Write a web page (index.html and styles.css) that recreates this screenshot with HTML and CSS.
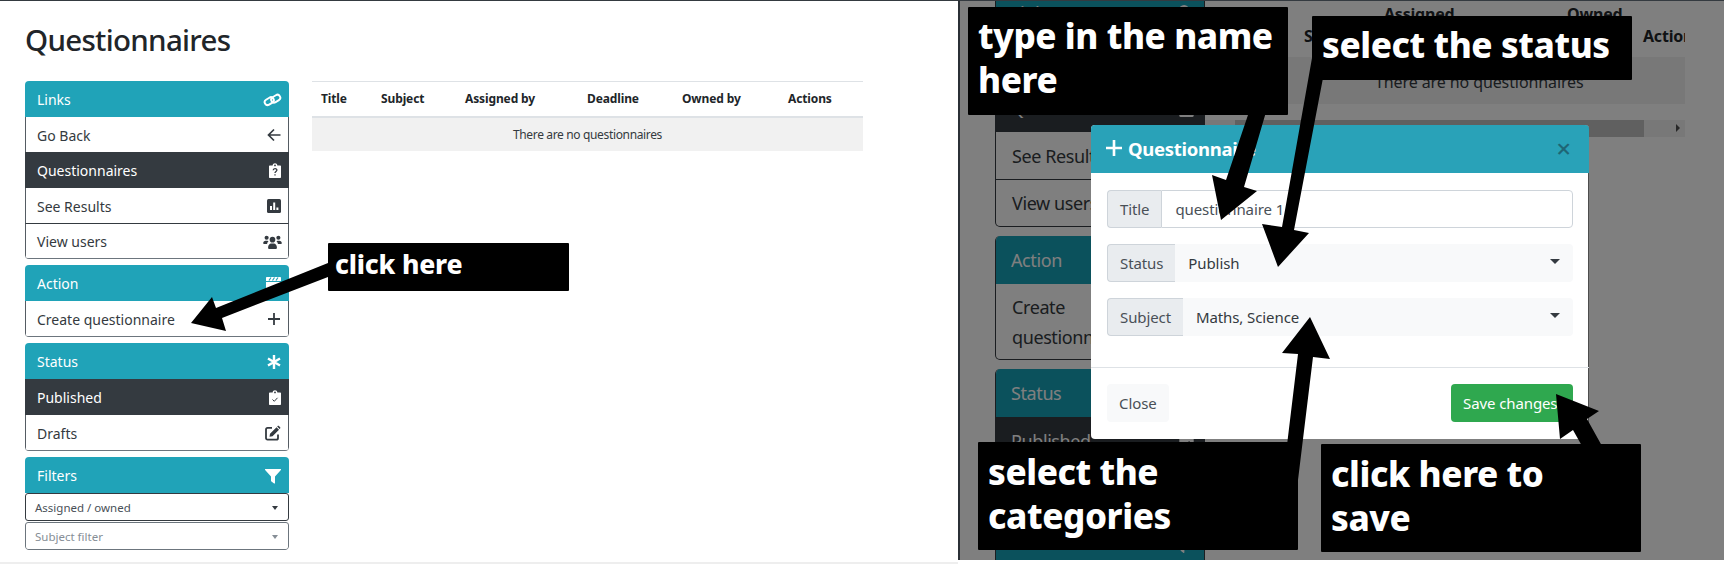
FILE: index.html
```html
<!DOCTYPE html>
<html lang="en">
<head>
<meta charset="utf-8">
<title>Questionnaires</title>
<link rel="stylesheet" href="styles.css">
</head>
<body>
<svg class="defs" width="0" height="0" aria-hidden="true">
  <symbol id="i-link" viewBox="0 0 20 16"><g fill="none" stroke="currentColor" stroke-width="2.2"><rect x="0.8" y="6.2" width="11" height="6.6" rx="3.3" transform="rotate(-32 6 9.5)"/><rect x="8.2" y="3.2" width="11" height="6.6" rx="3.3" transform="rotate(-32 13.7 6.5)"/></g></symbol>
  <symbol id="i-back" viewBox="0 0 14 14"><path d="M13.5 7H1.5M7 1.5 1.5 7 7 12.5" fill="none" stroke="currentColor" stroke-width="1.7"/></symbol>
  <symbol id="i-qclip" viewBox="0 0 12 15"><path fill="currentColor" fill-rule="evenodd" d="M1 2.5h2.6C3.8 1.1 4.8.2 6 .2s2.2.9 2.4 2.3H11c.6 0 1 .4 1 1V14c0 .6-.4 1-1 1H1c-.6 0-1-.4-1-1V3.500c0-.6.4-1 1-1zM6 1.500a.9.9 0 1 0 0 1.800.9.9 0 0 0 0-1.800z"/><path d="M4.200 7.300c0-2.300 3.700-2.300 3.700-.2 0 1.500-1.900 1.500-1.900 3M6 11.200v1.400" fill="none" stroke="#343a40" stroke-width="1.300"/></symbol>
  <symbol id="i-poll" viewBox="0 0 14 14"><rect width="14" height="14" rx="1.500" fill="currentColor"/><path d="M3 7h2v4H3zM6.200 3.500h2V11h-2zM9.400 8.500h2V11h-2z" fill="#fff"/></symbol>
  <symbol id="i-users" viewBox="0 0 20 15"><g fill="currentColor"><circle cx="3.700" cy="3" r="2.200"/><circle cx="16.300" cy="3" r="2.200"/><circle cx="10" cy="5" r="3"/><path d="M0 9.200c0-2 1.200-3 2.500-3h2c.5 0 1 .2 1.300.5-1 .7-1.500 1.700-1.600 3H1c-.6 0-1-.2-1-.5zM20 9.200c0-2-1.200-3-2.500-3h-2c-.5 0-1 .2-1.300.5 1 .7 1.500 1.700 1.600 3H19c.6 0 1-.2 1-.5zM5.300 13c0-2 1.500-4 3.200-4h3c1.700 0 3.200 2 3.200 4v1c0 .6-.4 1-1 1H6.300c-.6 0-1-.4-1-1z"/></g></symbol>
  <symbol id="i-clap" viewBox="0 0 15 15"><path fill="currentColor" d="M1 1h13c.6 0 1 .4 1 1v3H0V2c0-.6.4-1 1-1zM0 6h15v7c0 .6-.4 1-1 1H1c-.6 0-1-.4-1-1z"/><path d="M3 4.500 5 1.500M6.500 4.500l2-3M10 4.500l2-3" stroke="#20a3b8" stroke-width="1.200"/></symbol>
  <symbol id="i-plus" viewBox="0 0 14 14"><path d="M7 1v12M1 7h12" fill="none" stroke="currentColor" stroke-width="1.800"/></symbol>
  <symbol id="i-plus-bold" viewBox="0 0 14 14"><path d="M7 0v14M0 7h14" fill="none" stroke="currentColor" stroke-width="2.300"/></symbol>
  <symbol id="i-star" viewBox="0 0 14 14"><path d="M7 0v14M1 3.500l12 7M13 3.500l-12 7" fill="none" stroke="currentColor" stroke-width="2.400"/></symbol>
  <symbol id="i-cclip" viewBox="0 0 12 15"><path fill="currentColor" fill-rule="evenodd" d="M1 2.500h2.600C3.800 1.100 4.800.2 6 .2s2.200.9 2.400 2.300H11c.6 0 1 .4 1 1V14c0 .6-.4 1-1 1H1c-.6 0-1-.4-1-1V3.500c0-.6.4-1 1-1zM6 1.500a.9.9 0 1 0 0 1.800.9.9 0 0 0 0-1.800z"/><path d="m3.500 9.500 1.800 1.800 3.200-3.500" fill="none" stroke="#343a40" stroke-width="1"/></symbol>
  <symbol id="i-edit" viewBox="0 0 16 16"><path d="M13 9.500V13c0 1-.6 1.700-1.600 1.700H2.600C1.600 14.700 1 14 1 13V4.500c0-1 .6-1.600 1.600-1.600H7" fill="none" stroke="currentColor" stroke-width="1.800"/><path fill="currentColor" d="M11.500 2.200 14 4.700 7.500 11.200l-3 .5.500-3zM12.500 1.200c.5-.5 1.200-.5 1.600 0l.9.900c.5.500.5 1.100 0 1.600l-.4.400L12.100 1.600z"/></symbol>
  <symbol id="i-filter" viewBox="0 0 16 16"><path fill="currentColor" d="M.5 1h15c.5 0 .7.500.4.900L10 8.500V15c0 .5-.5.700-.9.400l-2.700-2c-.3-.2-.4-.4-.4-.8V8.500L.1 1.900C-.2 1.500 0 1 .5 1z"/></symbol>
</svg>

<main class="shot">
  <section class="panel panel-left">
    <h1 class="page-title">Questionnaires</h1>
    <div class="columns">
      <aside class="sidebar">
        <div class="card">
          <div class="card-head"><span>Links</span><svg class="ico ico-wide"><use href="#i-link"/></svg></div>
          <div class="item"><span>Go Back</span><svg class="ico"><use href="#i-back"/></svg></div>
          <div class="item active"><span>Questionnaires</span><svg class="ico ico-clip"><use href="#i-qclip"/></svg></div>
          <div class="item"><span>See Results</span><svg class="ico"><use href="#i-poll"/></svg></div>
          <div class="item sep"><span>View users</span><svg class="ico ico-wide"><use href="#i-users"/></svg></div>
        </div>
        <div class="card">
          <div class="card-head"><span>Action</span><svg class="ico ico-15"><use href="#i-clap"/></svg></div>
          <div class="item"><span>Create questionnaire</span><svg class="ico"><use href="#i-plus"/></svg></div>
        </div>
        <div class="card">
          <div class="card-head"><span>Status</span><svg class="ico"><use href="#i-star"/></svg></div>
          <div class="item active"><span>Published</span><svg class="ico ico-clip"><use href="#i-cclip"/></svg></div>
          <div class="item"><span>Drafts</span><svg class="ico ico-16"><use href="#i-edit"/></svg></div>
        </div>
        <div class="card card-filter">
          <div class="card-head"><span>Filters</span><svg class="ico ico-16"><use href="#i-filter"/></svg></div>
          <div class="filter"><span>Assigned / owned</span><i class="caret"></i></div>
          <div class="filter muted"><span>Subject filter</span><i class="caret"></i></div>
        </div>
      </aside>
      <div class="table-wrap">
        <table class="qtable">
          <thead>
            <tr><th class="c-title">Title</th><th class="c-subject">Subject</th><th class="c-assigned">Assigned by</th><th class="c-deadline">Deadline</th><th class="c-owned">Owned by</th><th class="c-actions">Actions</th></tr>
          </thead>
          <tbody>
            <tr><td colspan="6">There are no questionnaires</td></tr>
          </tbody>
        </table>
      </div>
    </div>
    <div class="note note-click">click here</div>
  </section>

  <section class="panel panel-right">
    <div class="page-back">
      <aside class="big-sidebar">
        <div class="big-card">
          <div class="big-head"><span>Links</span><svg class="big-ico big-ico-wide"><use href="#i-link"/></svg></div>
          <div class="big-item"><span>Go Back</span></div>
          <div class="big-item big-active"><span>Questionnaires</span><svg class="big-ico"><use href="#i-qclip"/></svg></div>
          <div class="big-item"><span>See Results</span></div>
          <div class="big-item big-sep"><span>View users</span></div>
        </div>
        <div class="big-card">
          <div class="big-head"><span>Action</span></div>
          <div class="big-item big-wrap"><span>Create<br>questionnaire</span></div>
        </div>
        <div class="big-card">
          <div class="big-head"><span>Status</span></div>
          <div class="big-item big-active"><span>Published</span><svg class="big-ico"><use href="#i-cclip"/></svg></div>
          <div class="big-item"><span>Drafts</span></div>
        </div>
        <div class="big-card">
          <div class="big-head"><span class="big-filter-label">Filters</span><svg class="big-ico"><use href="#i-filter"/></svg></div>
        </div>
      </aside>
      <div class="big-table">
        <div class="big-row-head">
          <span class="h-subject">Subject</span>
          <span class="h-assigned">Assigned<br>by</span>
          <span class="h-deadline">Deadline</span>
          <span class="h-owned">Owned<br>by</span>
          <span class="h-actions">Actions</span>
        </div>
        <div class="big-row-empty">There are no questionnaires</div>
        <div class="scrollbar"><div class="scroll-thumb"></div><i class="scroll-arrow"></i></div>
      </div>
    </div>
    <div class="dim"></div>
    <div class="modal">
      <div class="modal-head">
        <svg class="modal-plus"><use href="#i-plus-bold"/></svg>
        <span class="modal-title">Questionnaire</span>
        <span class="modal-x">×</span>
      </div>
      <div class="modal-body">
        <div class="field"><span class="addon">Title</span><span class="control input">questionnaire 1</span></div>
        <div class="field"><span class="addon">Status</span><span class="control sel">Publish<i class="caret dark"></i></span></div>
        <div class="field"><span class="addon">Subject</span><span class="control sel">Maths, Science<i class="caret dark"></i></span></div>
      </div>
      <div class="modal-foot">
        <span class="btn btn-close">Close</span>
        <span class="btn btn-save">Save changes</span>
      </div>
    </div>
  </section>

  <svg class="arrows" viewBox="0 0 1724 568" aria-hidden="true">
    <polygon points="328,263 216,308 212,297 191,323 226,331 222,318 328,277"/>
    <polygon points="1249,112 1226,180 1212,175 1221,220 1257,191 1244,187 1266,112"/>
    <polygon points="1312,58 1282,227 1262,224 1278,267 1309,233 1294,230 1323,78"/>
    <polygon points="1287,445 1298,354 1282,353 1310,317 1330,359 1313,357 1298,480"/>
    <polygon points="1582,446 1573,430 1560,439 1556,394 1599,411 1587,419 1602,446"/>
  </svg>

  <div class="note note-name">type in the name<br>here</div>
  <div class="note note-status">select the status</div>
  <div class="note note-cats">select the<br>categories</div>
  <div class="note note-save">click here to<br>save</div>
</main>
</body>
</html>
```
FILE: styles.css
```css
* { box-sizing: border-box; }
html, body { margin: 0; padding: 0; background: #fff; }
body { width: 1724px; height: 568px; overflow: hidden; font-family: "Noto Sans", "Open Sans", sans-serif; color: #212529; }
.defs { position: absolute; }
.shot { position: relative; display: flex; align-items: flex-start; width: 1724px; height: 568px; overflow: hidden; }

.panel { position: relative; border-top: 1px solid #343a40; overflow: hidden; }
.panel-left { width: 958px; height: 564px; padding: 24px 0 0 25px; border-bottom: 2px solid #eee; }
.panel-right { width: 766px; height: 560px; border-left: 2px solid #2b3036; }

.page-title { margin: 0 0 29px; height: 27px; font-size: 29.500px; line-height: 29px; font-weight: 500; letter-spacing: -0.7px; }
.columns { display: flex; gap: 23px; align-items: flex-start; }

.sidebar { width: 264px; display: flex; flex-direction: column; gap: 6px; }
.card { border-radius: 4px; overflow: hidden; border-bottom: 1px solid #6c757d; }
.card-filter { border-bottom: 0; }
.card-head { display: flex; justify-content: space-between; align-items: center; height: 36px; padding: 1px 8px 0 12px; background: #20a3b8; color: #fff; font-size: 14px; }
.item { display: flex; justify-content: space-between; align-items: center; height: 35px; padding: 1px 7px 0 11px; border: solid #555c63; border-width: 0 1px; background: #fff; color: #343a40; font-size: 14px; }
.item.active { background: #343a40; color: #fff; border-color: #343a40; height: 36px; }
.item.sep { border-top: 1px solid #343a40; }
.ico { width: 14px; height: 14px; display: block; flex: none; }
.ico-wide { width: 19px; margin-right: -1px; }
.ico-clip { width: 12px; height: 15px; }
.ico-15 { width: 15px; height: 15px; }
.ico-16 { width: 16px; height: 16px; }

.filter { display: flex; justify-content: space-between; align-items: center; height: 28px; margin-bottom: 1px; padding: 1px 10px 0 9px; border: 1px solid #343a40; border-radius: 3px; background: #fff; color: #495057; font-size: 11.500px; }
.filter.muted { color: #868e96; border-color: #6c757d; margin-bottom: 0; }
.caret { display: block; width: 0; height: 0; border: 3.500px solid transparent; border-top: 4px solid #343a40; border-bottom: 0; }
.filter.muted .caret { border-top-color: #868e96; }

.table-wrap { width: 551px; }
.qtable { width: 551px; table-layout: fixed; border-collapse: collapse; font-size: 12px; border-top: 1px solid #dee2e6; }
.qtable th { height: 35px; padding: 0 0 0 9px; text-align: left; font-weight: 700; color: #212529; border-bottom: 2px solid #dee2e6; letter-spacing: -0.12px; }
.qtable td { height: 34px; text-align: center; background: #f1f1f1; color: #343a40; letter-spacing: -0.35px; }
.c-title { width: 60px; }
.c-subject { width: 84px; }
.c-assigned { width: 122px; }
.c-deadline { width: 95px; }
.c-owned { width: 106px; }
.c-actions { width: 84px; }

.note { position: absolute; background: #000; color: #fff; font-weight: 800; z-index: 3; border-radius: 1px; }
.note-click { left: 328px; top: 242px; width: 241px; height: 48px; padding: 2px 7px; font-size: 26.500px; line-height: 38px; letter-spacing: -0.2px; }
.note-name, .note-status, .note-cats, .note-save { width: 320px; height: 108px; padding: 7px 10px; font-size: 35px; line-height: 44px; letter-spacing: -0.4px; }
.note-name { left: 968px; top: 7px; }
.note-status { left: 1312px; top: 16px; height: 64px; }
.note-cats { left: 978px; top: 442px; padding-top: 8px; }
.note-save { left: 1321px; top: 444px; padding-top: 8px; }

.arrows { position: absolute; left: 0; top: 0; width: 1724px; height: 568px; z-index: 2; fill: #000; }

.page-back { display: flex; width: 100%; height: 100%; background: #fff; padding-left: 35px; }
.big-sidebar { width: 210px; flex: none; margin-top: -12px; display: flex; flex-direction: column; gap: 9px; font-size: 18px; letter-spacing: -0.4px; }
.big-card { border-radius: 5px; overflow: hidden; border: solid #343a40; border-width: 0 1px 1px; flex: none; }
.big-head { height: 48px; background: #17a2b8; margin: 0 -1px; padding: 0 15px 0 16px; display: flex; align-items: center; justify-content: space-between; color: #fff; }
.big-filter-label { margin-top: -10px; }
.big-item { height: 47px; padding: 0 16px; display: flex; align-items: center; justify-content: space-between; color: #343a40; }
.big-item.big-active { background: #343a40; color: #fff; margin: 0 -1px; padding-right: 11px; height: 48px; }
.big-item.big-sep { border-top: 1px solid #343a40; }
.big-item.big-wrap { height: 75px; line-height: 30px; }
.big-ico { width: 15px; height: 18px; }
.big-ico-wide { width: 24px; }

.big-table { position: relative; width: 480px; overflow: hidden; font-size: 16px; }
.big-row-head { position: relative; height: 56px; font-weight: 700; line-height: 22px; letter-spacing: -0.2px; }
.big-row-head span { position: absolute; white-space: nowrap; }
.h-subject { left: 99px; top: 24px; }
.h-assigned { left: 179px; top: 2px; }
.h-deadline { left: 265px; top: 24px; }
.h-owned { left: 362px; top: 2px; }
.h-actions { left: 438px; top: 24px; }
.big-row-empty { height: 47px; padding: 14px 0 0 170px; background: #f1f1f1; font-size: 16px; letter-spacing: -0.1px; color: #343a40; white-space: nowrap; }
.scrollbar { position: relative; margin-top: 16px; height: 17px; background: #f1f1f1; }
.scroll-thumb { position: absolute; left: 30px; top: 0; width: 409px; height: 17px; background: #c1c1c1; }
.scroll-arrow { position: absolute; right: 5px; top: 4px; width: 0; height: 0; border: 4.500px solid transparent; border-left: 4px solid #505050; border-right: 0; }

.dim { position: absolute; inset: 0; background: rgba(0, 0, 0, .5); }

.modal { position: absolute; left: 131px; top: 124px; width: 498px; height: 314px; background: #fff; border-radius: 4px; overflow: hidden; box-shadow: inset -1px 0 0 #4d4d4d; }
.modal-head { display: flex; align-items: center; height: 48px; padding: 0 18px 2px 15px; background: #29a2b8; color: #fff; }
.modal-plus { width: 16px; height: 16px; margin-right: 6px; }
.modal-title { font-size: 18.500px; font-weight: 700; flex: 1; letter-spacing: -0.3px; }
.modal-x { color: #1f6675; font-size: 26px; line-height: 26px; font-weight: 500; }
.modal-body { display: flex; flex-direction: column; gap: 16px; padding: 17px 16px 0; height: 195px; border-bottom: 1px solid #dee2e6; font-size: 15px; }
.field { display: flex; height: 38px; }
.addon { display: flex; align-items: center; padding: 0 12px; background: #e9ecef; border: 1px solid #ced4da; border-right: 0; border-radius: 4px 0 0 4px; color: #495057; letter-spacing: -0.1px; }
.control { flex: 1; display: flex; align-items: center; justify-content: space-between; padding: 0 13px; color: #495057; border-radius: 0 4px 4px 0; letter-spacing: -0.1px; }
.input { border: 1px solid #ced4da; background: #fff; }
.sel { background: #f8f9fa; color: #343a40; padding-right: 13px; }
.caret.dark { border-width: 5px; border-bottom: 0; margin-top: -4px; }
.modal-foot { display: flex; justify-content: space-between; padding: 16px 16px 0; }
.btn { display: flex; align-items: center; height: 38px; padding: 0 12px; border-radius: 4px; font-size: 15px; white-space: nowrap; letter-spacing: -0.1px; }
.btn-close { background: #f8f9fa; color: #495057; }
.btn-save { background: #2fa84f; color: #fff; width: 122px; }
```
